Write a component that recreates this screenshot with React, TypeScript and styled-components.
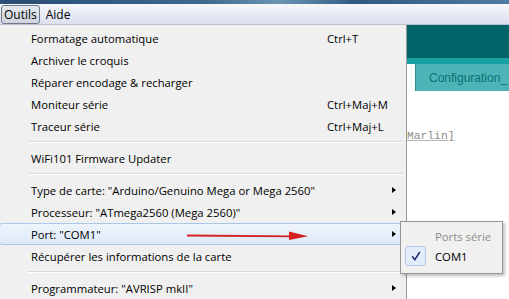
import React from "react";
import styled, { createGlobalStyle } from "styled-components";

const Global = createGlobalStyle`
  html, body { margin: 0; padding: 0; background: #fff; overflow: hidden; }
  body { width: 509px; height: 299px; font-family: "Open Sans", "Noto Sans", sans-serif; }
`;

const Page = styled.div`
  position: relative;
  width: 509px;
  height: 299px;
  display: flex;
  flex-direction: column;
  overflow: hidden;
`;

const TitleStrip = styled.div`
  height: 4px;
  background: linear-gradient(90deg, #2b4c74 0%, #3b6a8c 40%, #6d93b3 55%, #2f5a80 70%, #4d7ba1 100%);
`;

const MenuBar = styled.div`
  height: 20px;
  display: flex;
  align-items: center;
  gap: 3px;
  padding-left: 1px;
  background: linear-gradient(#f7f8fb, #e9ecf5 45%, #dbe0ee);
  border-bottom: 1px solid #b9c0cf;
`;

const BarItem = styled.div<{ $active?: boolean }>`
  height: 17px;
  padding: 0 2px;
  display: flex;
  align-items: center;
  font-size: 12px;
  color: #000;
  border: 1px solid ${(p) => (p.$active ? "#6f7888" : "transparent")};
  border-radius: 3px;
  background: ${(p) => (p.$active ? "linear-gradient(#e6e9ef, #cfd4de)" : "transparent")};
`;

const Main = styled.div`
  flex: 1;
  display: flex;
  min-height: 0;
`;

const Menu = styled.div`
  width: 406px;
  background: #f0f0f0;
  border-right: 1px solid #979797;
  padding-top: 2px;
  display: flex;
  flex-direction: column;
`;

const Row = styled.div<{ $hi?: boolean }>`
  height: 22px;
  flex: none;
  display: grid;
  grid-template-columns: 296px 1fr 14px;
  align-items: center;
  padding-left: 31px;
  font-size: 11.3px;
  color: #000;
  margin-right: 3px;
  border: 1px solid ${(p) => (p.$hi ? "#a9c7ea" : "transparent")};
  border-radius: 3px;
  margin-left: -1px;
  background: ${(p) => (p.$hi ? "linear-gradient(#eef4fc, #dde9f8)" : "transparent")};
  box-sizing: border-box;
  white-space: nowrap;
`;

const Shortcut = styled.span``;

const Arrow = styled.span`
  width: 0;
  height: 0;
  border-top: 3.5px solid transparent;
  border-bottom: 3.5px solid transparent;
  border-left: 4px solid #000;
  justify-self: start;
  margin-left: 4px;
`;

const Sep = styled.div`
  height: 10px;
  flex: none;
  display: flex;
  align-items: center;
  padding-left: 28px;
  padding-right: 3px;
  &::after {
    content: "";
    flex: 1;
    height: 1px;
    background: #d7d7d7;
    border-bottom: 1px solid #fff;
  }
`;

const Editor = styled.div`
  flex: 1;
  display: flex;
  flex-direction: column;
  background: #fff;
`;

const Header = styled.div`
  height: 33px;
  background: #006468;
`;

const Band = styled.div`
  height: 6px;
  background: #17a1a5;
`;

const Tabs = styled.div`
  height: 27px;
  display: flex;
  padding-left: 8px;
`;

const Tab = styled.div`
  flex: 1;
  background: #4db5b8;
  border-left: 1px solid #2b8e92;
  color: #0a6f73;
  font-family: "Liberation Sans", Arial, sans-serif;
  font-size: 12px;
  display: flex;
  align-items: center;
  padding-left: 13px;
  white-space: nowrap;
  overflow: hidden;
`;

const Code = styled.div`
  padding-top: 39px;
  font-family: "Liberation Mono", monospace;
  font-size: 11.3px;
  color: #8a8a8a;
  text-decoration: underline;
  text-decoration-color: #b5b5b5;
`;

const Sub = styled.div`
  position: absolute;
  left: 400px;
  top: 221px;
  width: 101px;
  height: 47px;
  background: #f0f0f0;
  border: 1px solid #979797;
  box-shadow: 2px 2px 3px rgba(0, 0, 0, 0.25);
  display: flex;
  flex-direction: column;
  padding-top: 4px;
  box-sizing: content-box;
`;

const SubRow = styled.div<{ $muted?: boolean }>`
  height: 20px;
  display: flex;
  align-items: center;
  font-size: 11.3px;
  color: ${(p) => (p.$muted ? "#8d8d8d" : "#000")};
`;

const CheckCell = styled.div<{ $on?: boolean }>`
  width: 21px;
  height: 20px;
  margin: 0 9px 0 4px;
  box-sizing: border-box;
  display: flex;
  align-items: center;
  justify-content: center;
  border: 1px solid ${(p) => (p.$on ? "#aac8ea" : "transparent")};
  border-radius: 3px;
  background: ${(p) => (p.$on ? "#e3edf9" : "transparent")};
`;

const ArrowSvg = styled.svg`
  position: absolute;
  left: 186px;
  top: 229px;
`;

const items: Array<
  | { t: "sep" }
  | { t: "row"; label: string; sc?: string; sub?: boolean; hi?: boolean }
> = [
  { t: "row", label: "Formatage automatique", sc: "Ctrl+T" },
  { t: "row", label: "Archiver le croquis" },
  { t: "row", label: "Réparer encodage & recharger" },
  { t: "row", label: "Moniteur série", sc: "Ctrl+Maj+M" },
  { t: "row", label: "Traceur série", sc: "Ctrl+Maj+L" },
  { t: "sep" },
  { t: "row", label: "WiFi101 Firmware Updater" },
  { t: "sep" },
  { t: "row", label: 'Type de carte: "Arduino/Genuino Mega or Mega 2560"', sub: true },
  { t: "row", label: 'Processeur: "ATmega2560 (Mega 2560)"', sub: true },
  { t: "row", label: 'Port: "COM1"', sub: true, hi: true },
  { t: "row", label: "Récupérer les informations de la carte" },
  { t: "sep" },
  { t: "row", label: 'Programmateur: "AVRISP mkII"', sub: true },
];

export default function App() {
  return (
    <Page>
      <Global />
      <TitleStrip />
      <MenuBar>
        <BarItem $active>Outils</BarItem>
        <BarItem>Aide</BarItem>
      </MenuBar>
      <Main>
        <Menu>
          {items.map((it, i) =>
            it.t === "sep" ? (
              <Sep key={i} />
            ) : (
              <Row key={i} $hi={it.hi}>
                <span>{it.label}</span>
                <Shortcut>{it.sc ?? ""}</Shortcut>
                {it.sub ? <Arrow /> : <span />}
              </Row>
            )
          )}
        </Menu>
        <Editor>
          <Header />
          <Band />
          <Tabs>
            <Tab>Configuration_</Tab>
          </Tabs>
          <Code>Marlin]</Code>
        </Editor>
      </Main>
      <ArrowSvg width="124" height="14" viewBox="0 0 124 14">
        <path d="M1 5.4 L106 6.4 L106 8.2 L1 7.4 Z" fill="#d42020" />
        <path d="M103 2.6 L122 7.2 L103 11 Z" fill="#d42020" />
      </ArrowSvg>
      <Sub>
        <SubRow $muted>
          <CheckCell />
          Ports série
        </SubRow>
        <SubRow>
          <CheckCell $on>
            <svg width="10" height="10" viewBox="0 0 10 10">
              <path d="M1.2 5.2 L3.8 8.6 L8.8 1" stroke="#1c2a6e" strokeWidth="1.5" fill="none" />
            </svg>
          </CheckCell>
          COM1
        </SubRow>
      </Sub>
    </Page>
  );
}
